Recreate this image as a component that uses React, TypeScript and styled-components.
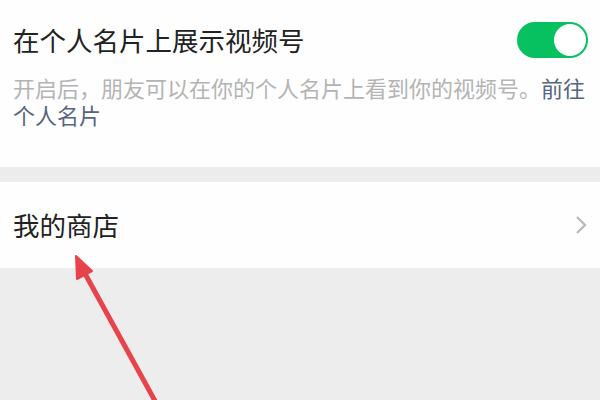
import React from "react";
import styled, { createGlobalStyle } from "styled-components";

const Global = createGlobalStyle`
  html, body { margin: 0; padding: 0; }
  body {
    width: 600px;
    height: 400px;
    overflow: hidden;
    background: #ededed;
    font-family: "Noto Sans CJK SC", "Noto Sans", sans-serif;
  }
`;

const Page = styled.div`
  position: relative;
  width: 600px;
  height: 400px;
  background: #ededed;
  display: flex;
  flex-direction: column;
`;

const Section = styled.section<{ $pt: number; $pb: number }>`
  background: #fefefe;
  padding: ${(p) => p.$pt}px 12px ${(p) => p.$pb}px 13px;
  display: flex;
  flex-direction: column;
`;

const Gap = styled.div`
  height: 15px;
  background: #ececec;
`;

const Row = styled.div<{ $h: number }>`
  height: ${(p) => p.$h}px;
  display: flex;
  align-items: center;
  justify-content: space-between;
`;

const Title = styled.span`
  font-size: 26.5px;
  line-height: 36px;
  color: #222;
`;

const Desc = styled.div`
  margin-top: 16px;
  font-size: 22px;
  line-height: 27px;
  color: #b4b4b4;
`;

const Line = styled.div`
  white-space: nowrap;
`;

const Link = styled.span`
  color: #566580;
`;

const Switch = styled.div`
  width: 71px;
  height: 36px;
  border-radius: 18px;
  background: #07c160;
  display: flex;
  align-items: center;
  justify-content: flex-end;
  padding: 0 2px;
  box-sizing: border-box;
`;

const Knob = styled.div`
  width: 32px;
  height: 32px;
  border-radius: 50%;
  background: #fff;
`;

const Overlay = styled.svg`
  position: absolute;
  left: 0;
  top: 0;
  pointer-events: none;
`;

export default function App() {
  return (
    <>
      <Global />
      <Page>
        <Section $pt={22} $pb={39}>
          <Row $h={36}>
            <Title>在个人名片上展示视频号</Title>
            <Switch>
              <Knob />
            </Switch>
          </Row>
          <Desc>
            <Line>
              开启后，朋友可以在你的个人名片上看到你的视频号。<Link>前往</Link>
            </Line>
            <Line>
              <Link>个人名片</Link>
            </Line>
          </Desc>
        </Section>
        <Gap />
        <Section $pt={0} $pb={0}>
          <Row $h={86}>
            <Title>我的商店</Title>
            <svg width="14" height="22" viewBox="0 0 14 22">
              <path d="M3 3 L11 11 L3 19" fill="none" stroke="#b8b8b8" strokeWidth="2.2" />
            </svg>
          </Row>
        </Section>
        <Overlay width="600" height="400" viewBox="0 0 600 400">
          <line x1="160" y1="410" x2="83" y2="270" stroke="#e8434b" strokeWidth="5" strokeLinecap="round" />
          <polygon points="76,256 92,271 77,279" fill="#e8434b" stroke="#e8434b" strokeWidth="2" strokeLinejoin="round" />
        </Overlay>
      </Page>
    </>
  );
}
